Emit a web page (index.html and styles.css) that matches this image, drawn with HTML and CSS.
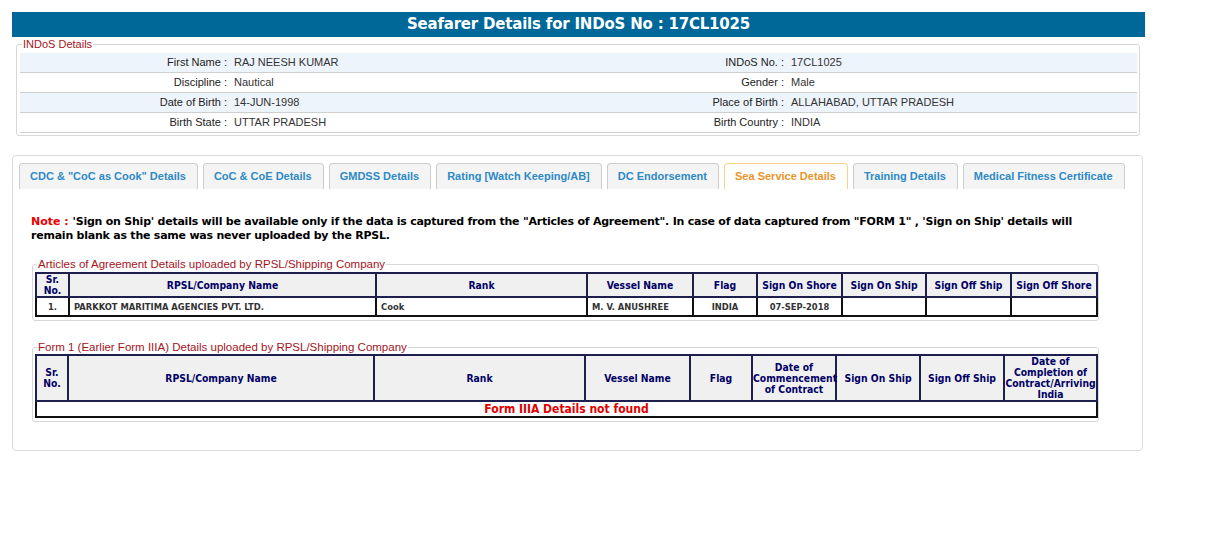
FILE: index.html
```html
<!DOCTYPE html>
<html>
<head>
<meta charset="utf-8">
<link rel="stylesheet" href="styles.css">
</head>
<body>
<div class="page">
  <div class="title-bar">Seafarer Details for INDoS No : 17CL1025</div>

  <fieldset class="indos">
    <legend>INDoS Details</legend>
    <div class="info-grid">
      <div class="row alt"><span class="lbl">First Name :</span><span class="val">RAJ NEESH KUMAR</span><span class="lbl">INDoS No. :</span><span class="val">17CL1025</span></div>
      <div class="row"><span class="lbl">Discipline :</span><span class="val">Nautical</span><span class="lbl">Gender :</span><span class="val">Male</span></div>
      <div class="row alt"><span class="lbl">Date of Birth :</span><span class="val">14-JUN-1998</span><span class="lbl">Place of Birth :</span><span class="val">ALLAHABAD, UTTAR PRADESH</span></div>
      <div class="row"><span class="lbl">Birth State :</span><span class="val">UTTAR PRADESH</span><span class="lbl">Birth Country :</span><span class="val">INDIA</span></div>
    </div>
  </fieldset>

  <div class="panel">
    <ul class="tabs">
      <li class="tab">CDC &amp; "CoC as Cook" Details</li>
      <li class="tab">CoC &amp; CoE Details</li>
      <li class="tab">GMDSS Details</li>
      <li class="tab">Rating [Watch Keeping/AB]</li>
      <li class="tab">DC Endorsement</li>
      <li class="tab active">Sea Service Details</li>
      <li class="tab">Training Details</li>
      <li class="tab">Medical Fitness Certificate</li>
    </ul>

    <p class="note"><span class="note-lbl">Note :</span> <span class="note-txt">'Sign on Ship' details will be available only if the data is captured from the "Articles of Agreement". In case of data captured from "FORM 1" , 'Sign on Ship' details will remain blank as the same was never uploaded by the RPSL.</span></p>

    <fieldset class="group">
      <legend>Articles of Agreement Details uploaded by RPSL/Shipping Company</legend>
      <table class="grid t1">
        <colgroup>
          <col class="c-sr"><col class="c-co"><col class="c-rank"><col class="c-ves"><col class="c-flag"><col class="c-d1"><col class="c-d2"><col class="c-d3"><col class="c-d4">
        </colgroup>
        <thead>
          <tr><th>Sr.<br>No.</th><th>RPSL/Company Name</th><th>Rank</th><th>Vessel Name</th><th>Flag</th><th>Sign On Shore</th><th>Sign On Ship</th><th>Sign Off Ship</th><th>Sign Off Shore</th></tr>
        </thead>
        <tbody>
          <tr><td class="ctr">1.</td><td>PARKKOT MARITIMA AGENCIES PVT. LTD.</td><td>Cook</td><td>M. V. ANUSHREE</td><td class="ctr">INDIA</td><td class="ctr">07-SEP-2018</td><td></td><td></td><td></td></tr>
        </tbody>
      </table>
    </fieldset>

    <fieldset class="group g2">
      <legend>Form 1 (Earlier Form IIIA) Details uploaded by RPSL/Shipping Company</legend>
      <table class="grid t2">
        <colgroup>
          <col class="c-sr"><col class="c-co"><col class="c-rank"><col class="c-ves"><col class="c-flag"><col class="c-d1"><col class="c-d2"><col class="c-d3"><col class="c-d4">
        </colgroup>
        <thead>
          <tr><th>Sr.<br>No.</th><th>RPSL/Company Name</th><th>Rank</th><th>Vessel Name</th><th>Flag</th><th>Date of<br>Commencement<br>of Contract</th><th>Sign On Ship</th><th>Sign Off Ship</th><th>Date of<br>Completion of<br>Contract/Arriving<br>India</th></tr>
        </thead>
        <tbody>
          <tr><td colspan="9" class="empty">Form IIIA Details not found</td></tr>
        </tbody>
      </table>
    </fieldset>
  </div>
</div>
</body>
</html>
```

FILE: styles.css
```css
html, body {
  margin: 0;
  padding: 0;
  background: #fff;
}
body {
  font-family: "Liberation Sans", Arial, sans-serif;
  font-size: 11px;
  color: #333;
}
.page {
  margin: 12px 0 0 12px;
  width: 1133px;
}
.title-bar {
  background: #006899;
  color: #fff;
  font-family: "DejaVu Sans", Verdana, sans-serif;
  font-weight: bold;
  font-size: 15px;
  letter-spacing: -0.2px;
  height: 25px;
  line-height: 25px;
  text-align: center;
}
fieldset {
  margin: 0;
  padding: 0;
  min-width: 0;
}
legend {
  padding: 0 1px;
  color: #a3141c;
  font-family: "Liberation Sans", Arial, sans-serif;
}
.indos {
  margin: 1px 5px 0 4px;
  border: 1px solid #d8d8d8;
  border-radius: 3px;
  padding: 3px 2px 2px 3px;
}
.indos legend {
  font-size: 11px;
  line-height: 12px;
  margin-left: 2px;
}
.info-grid {
  display: flex;
  flex-direction: column;
}
.row {
  display: grid;
  grid-template-columns: 210px 347px 210px 1fr;
  height: 19px;
  line-height: 19px;
  border-bottom: 1px solid #cfcfcf;
}
.row.alt {
  background: #eef4fb;
}
.lbl {
  text-align: right;
  color: #222;
  padding-right: 3px;
  white-space: nowrap;
}
.val {
  color: #333;
  padding-left: 4px;
  white-space: nowrap;
}

.panel {
  margin-top: 19px;
  width: 1131px;
  height: 296px;
  border: 1px solid #dcdcdc;
  border-radius: 4px;
  box-sizing: border-box;
  padding: 7px 0 0 6px;
}
.tabs {
  list-style: none;
  margin: 0;
  padding: 0;
  display: flex;
  gap: 5px;
}
.tab {
  height: 26px;
  line-height: 25px;
  box-sizing: border-box;
  padding: 0 11px 0 10px;
  border: 1px solid #cccccc;
  border-bottom: none;
  border-radius: 4px 4px 0 0;
  background: #f4f4f4;
  color: #2d8ac7;
  font-weight: bold;
  font-size: 11px;
  white-space: nowrap;
}
.tab.active {
  background: #fff;
  color: #e9952a;
  border-color: #f2d58a;
}
.note {
  margin: 26px 0 0 12px;
  font-family: "DejaVu Sans", Verdana, sans-serif;
  font-weight: bold;
  font-size: 11px;
  line-height: 14px;
  color: #000;
  width: 1080px;
}
.note-lbl {
  color: #ee0000;
}
.note-txt {
  letter-spacing: -0.23px;
}
.group {
  margin: 15px 0 0 13px;
  width: 1067px;
  box-sizing: border-box;
  border: 1px solid #d8d8d8;
  border-radius: 3px;
  padding: 0 2px 3px 2px;
}
.group legend {
  font-size: 11.5px;
  line-height: 13px;
  margin-left: 2px;
}
.g2 {
  margin-top: 20px;
}
.grid {
  width: 1061px;
  border-collapse: collapse;
  table-layout: fixed;
  font-family: "DejaVu Sans Condensed", "DejaVu Sans", Tahoma, sans-serif;
  font-weight: bold;
}
.t1 {
  margin-top: 1px;
}
.c-sr { width: 33px; }
.c-co { width: 307px; }
.c-rank { width: 211px; }
.c-ves { width: 106px; }
.c-flag { width: 64px; }
.c-d1 { width: 85px; }
.c-d2 { width: 84px; }
.c-d3 { width: 85px; }
.c-d4 { width: 86px; }
.t2 .c-sr { width: 32px; }
.t2 .c-co { width: 306px; }
.t2 .c-rank { width: 211px; }
.t2 .c-ves { width: 105px; }
.t2 .c-flag { width: 62px; }
.t2 .c-d1 { width: 84px; }
.t2 .c-d2 { width: 84px; }
.t2 .c-d3 { width: 84px; }
.t2 .c-d4 { width: 93px; }
.grid th {
  background: #f0f0f0;
  color: #000066;
  font-size: 10.3px;
  line-height: 11px;
  border: 2px solid #1f1f4f;
  padding: 0;
  height: 20px;
  font-weight: bold;
}
.t2 th {
  height: 42px;
}
.grid td {
  border: 2px solid #111;
  color: #333;
  font-size: 9.3px;
  height: 17px;
  padding: 0 4px;
  white-space: nowrap;
  overflow: hidden;
}
.grid td.ctr {
  text-align: center;
}
.grid td.empty {
  color: #e00000;
  font-size: 12px;
  text-align: center;
  height: 14px;
  line-height: 14px;
  padding: 0;
}
```
